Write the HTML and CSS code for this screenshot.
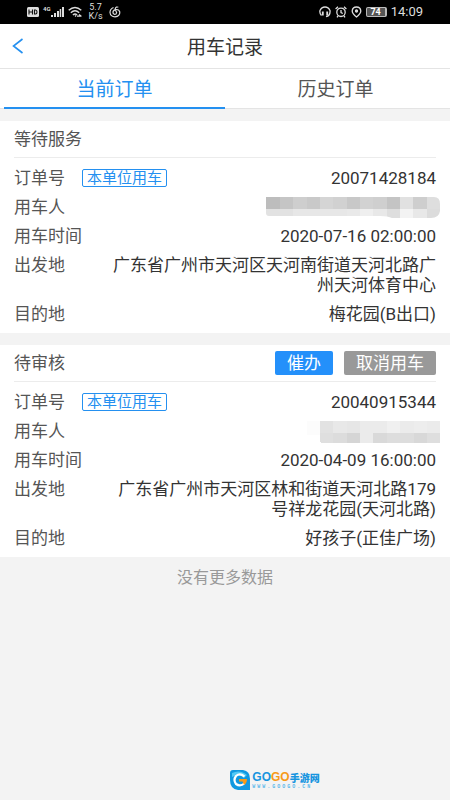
FILE: index.html
```html
<!DOCTYPE html>
<html lang="zh-CN">
<head>
<meta charset="utf-8">
<meta name="viewport" content="width=device-width, initial-scale=1">
<title>用车记录</title>
<link rel="stylesheet" href="styles.css">
</head>
<body>
<div class="status">
  <div class="status-group">
    <svg width="12" height="10" viewBox="0 0 12 10"><rect x="0" y="0" width="12" height="10" rx="1.5" fill="#ddd"/><path d="M2 2.500v5M5.500 2.500v5M2 5h3.500M7.500 3v4h1q1.500 0 1.500-2t-1.500-2z" fill="none" stroke="#111" stroke-width="1.100"/></svg>
    <div class="signal"><span class="net">4G</span><svg width="13" height="12" viewBox="0 0 13 12" fill="#ddd"><path d="M0 9h2v2H0zM3 7h2v4H3zM6 5h2v6H6zM8.700 3h1.500v8H8.700zM11 1h2v10h-2z"/></svg></div>
    <svg width="15" height="12" viewBox="0 0 15 12" fill="none" stroke="#ddd" stroke-width="1.400"><path d="M.7 4.300Q7 -1.200 13.300 4.300M2.800 6.700Q7 3 11.200 6.700M4.900 9Q7 7.200 9.100 9"/><path d="M7 9.500l1 1M9 10.200h4.500M11 8.500l2 1.500" stroke-width="1.200"/></svg>
    <div class="speed"><span>5.7</span><span>K/s</span></div>
    <svg width="12" height="12" viewBox="0 0 12 12" fill="none" stroke="#ddd" stroke-width="1.200"><path d="M4.500 1.500Q1 3 1 6.500Q1.500 10.800 6 10.800Q11 10.300 10.800 6Q10 3 6.500 3.600Q3.600 4.200 4 7Q5 9 7 8Q8.300 6.500 7 5.300L6.300 2.500Q7 .3 9.300 1.300"/></svg>
  </div>
  <div class="status-group">
    <svg width="12" height="12" viewBox="0 0 12 12" fill="none" stroke="#ddd" stroke-width="1.300"><path d="M2.500 9.500Q.3 7 1 4.500Q2.500 1 6 1T11 4.500Q11.600 9.500 7 10.700"/><path d="M3.800 5.500v4M8.200 5.500v4" stroke-width="1.800"/></svg>
    <svg width="12" height="12" viewBox="0 0 12 12" fill="none" stroke="#ddd" stroke-width="1.300"><circle cx="6" cy="6.300" r="4.200"/><path d="M.6 3L3 .8M9 .8L11.400 3M6 4v2.500l1.800 1M3 10l-1 1.300M9 10l1 1.300"/></svg>
    <svg width="11" height="12" viewBox="0 0 11 12" fill="none" stroke="#ddd" stroke-width="1.300"><path d="M5.500 11Q1.200 7.500 1.200 5Q1.500 1 5.500 1T9.800 5Q9.800 7.500 5.500 11z"/><circle cx="5.500" cy="5" r="1" fill="#ddd"/></svg>
    <div class="battery">74</div>
    <span class="clock">14:09</span>
  </div>
</div>

<header class="nav">
  <button class="back" type="button" aria-label="返回"><svg width="12" height="16" viewBox="0 0 12 16"><path d="M10.500 1L1.500 8l9 7" fill="none" stroke="#2490f0" stroke-width="1.600"/></svg></button>
  <h1>用车记录</h1>
</header>

<nav class="tabs">
  <button class="tab active" type="button">当前订单</button>
  <button class="tab" type="button">历史订单</button>
</nav>

<main>
  <section class="card">
    <div class="card-head"><h2>等待服务</h2></div>
    <dl>
      <div class="row"><dt>订单号<span class="tag">本单位用车</span></dt><dd>20071428184</dd></div>
      <div class="row"><dt>用车人</dt><dd class="masked">
        <svg width="174" height="22" viewBox="0 0 174 22" shape-rendering="crispEdges">
          <clipPath id="m1"><path d="M0 0H168Q174 0 174 7V14Q173 21 165 21H126Q122 19 114 19H3Q0 19 0 16z"/></clipPath>
          <g clip-path="url(#m1)">
            <path fill="#bdbdbd" d="M0 0h14v12H0z"/><path fill="#c5c5c5" d="M14 0h13v12H14z"/><path fill="#cecece" d="M27 0h14v12H27z"/><path fill="#c9c9c9" d="M41 0h13v12H41z"/><path fill="#d5d5d5" d="M54 0h13v12H54z"/><path fill="#d1d1d1" d="M67 0h14v12H67z"/><path fill="#c8c8c8" d="M81 0h13v12H81z"/><path fill="#d2d2d2" d="M94 0h13v12H94z"/><path fill="#cfcfcf" d="M107 0h14v12h-14z"/><path fill="#c4c4c4" d="M121 0h13v12h-13z"/><path fill="#e1e1e1" d="M134 0h13v12h-13z"/><path fill="#cecece" d="M147 0h14v12h-14z"/><path fill="#dedede" d="M161 0h13v12h-13z"/>
            <path fill="#e2e2e2" d="M0 12h27v10H0z"/><path fill="#e7e7e7" d="M27 12h54v10H27z"/><path fill="#e9e9e9" d="M81 12h13v10H81z"/><path fill="#efefef" d="M94 12h13v10H94z"/><path fill="#e8e8e8" d="M107 12h14v10h-14z"/><path fill="#dedede" d="M121 12h13v10h-13z"/><path fill="#f3f3f3" d="M134 12h13v10h-13z"/><path fill="#e8e8e8" d="M147 12h14v10h-14z"/><path fill="#dcdcdc" d="M161 12h13v10h-13z"/>
          </g>
        </svg></dd></div>
      <div class="row"><dt>用车时间</dt><dd>2020-07-16 02:00:00</dd></div>
      <div class="row"><dt>出发地</dt><dd>广东省广州市天河区天河南街道天河北路广州天河体育中心</dd></div>
      <div class="row"><dt>目的地</dt><dd>梅花园(B出口)</dd></div>
    </dl>
  </section>

  <section class="card">
    <div class="card-head"><h2>待审核</h2>
      <div class="actions"><button class="btn primary" type="button">催办</button><button class="btn" type="button">取消用车</button></div>
    </div>
    <dl>
      <div class="row"><dt>订单号<span class="tag">本单位用车</span></dt><dd>20040915344</dd></div>
      <div class="row"><dt>用车人</dt><dd class="masked">
        <svg width="133" height="22" viewBox="0 1 133 22" shape-rendering="crispEdges">
          <path fill="#fcfcfc" d="M0 1h13v14H0z"/><path fill="#e2e2e2" d="M13 1h13v12H13z"/><path fill="#e8e8e8" d="M26 1h14v12H26z"/><path fill="#e6e6e6" d="M40 1h13v12H40z"/><path fill="#ebebeb" d="M53 1h27v12H53z"/><path fill="#f0f0f0" d="M80 1h13v12H80z"/><path fill="#ebebeb" d="M93 1h14v12H93z"/><path fill="#ededed" d="M107 1h13v12h-13z"/><path fill="#ebebeb" d="M120 1h13v12h-13z"/>
          <path fill="#dfdfdf" d="M13 13h13v11h-4q-6 0-9-2z"/><path fill="#dcdcdc" d="M26 13h14v11H26z"/><path fill="#d5d5d5" d="M40 13h13v11H40z"/><path fill="#ebebeb" d="M53 13h13v11H53z"/><path fill="#d9d9d9" d="M66 13h14v11H66z"/><path fill="#dddddd" d="M80 13h27v11H80z"/><path fill="#d8d8d8" d="M107 13h13v11h-13z"/><path fill="#dedede" d="M120 13h13v11h-13z"/>
        </svg></dd></div>
      <div class="row"><dt>用车时间</dt><dd>2020-04-09 16:00:00</dd></div>
      <div class="row"><dt>出发地</dt><dd>广东省广州市天河区林和街道天河北路179号祥龙花园(天河北路)</dd></div>
      <div class="row"><dt>目的地</dt><dd>好孩子(正佳广场)</dd></div>
    </dl>
  </section>
  <p class="end">没有更多数据</p>
</main>

<footer class="brand">
  <svg width="20" height="20" viewBox="0 0 20 20"><path d="M3 0H13Q20 1 20 9V20H8Q0 19 0 10V3Q0 0 3 0z" fill="#1198e0"/><path d="M2 3Q10-1 17 5L14 8Q9 3 2 7z" fill="#53c9f4"/><path d="M14.500 6.500Q10 2.500 6 6Q3 10 6 14Q10 17 14.500 13.500" fill="none" stroke="#fff" stroke-width="2.200"/><path d="M9 9h8q0 4-3 6l-1.500-3.500H9z" fill="#f79a18"/></svg>
  <div class="brand-text">
    <div class="brand-name"><span class="blue">GO</span><span class="orange">GO</span><span class="cn">手游网</span></div>
    <div class="brand-url">WWW.GOOGO.CN</div>
  </div>
</footer>
</body>
</html>
```

FILE: styles.css
```css
* { box-sizing: border-box; margin: 0; padding: 0; }
body {
  min-height: 100vh;
  display: flex;
  flex-direction: column;
  background: #f3f3f3;
  color: #333;
  font: 17px/20px Roboto, "Noto Sans CJK SC", sans-serif;
}
button { font: inherit; border: 0; background: none; cursor: pointer; }
svg { display: block; flex: none; }

.status {
  height: 24px;
  padding: 0 27px;
  display: flex;
  justify-content: space-between;
  align-items: center;
  background: #000;
  color: #ddd;
}
.status-group { display: flex; align-items: center; gap: 4px; }
.signal { display: flex; align-items: flex-start; }
.net { font-size: 6px; line-height: 6px; font-weight: 700; }
.speed {
  display: flex;
  flex-direction: column;
  align-items: center;
  padding: 0 2px;
  font-size: 9px;
  line-height: 9px;
}
.battery {
  width: 21px;
  border: 1px solid #bbb;
  border-right-width: 2px;
  border-radius: 2px;
  background: #555;
  color: #fff;
  text-align: center;
  font-size: 9px;
  line-height: 8px;
  font-weight: 700;
}
.clock { font-size: 13px; }

.nav {
  height: 45px;
  display: grid;
  grid-template-columns: 44px 1fr 44px;
  align-items: center;
  background: #fff;
  border-bottom: 1px solid #e4e4e4;
}
.nav h1 { padding-top: 4px; font-size: 19px; line-height: 24px; font-weight: 400; text-align: center; }
.back { height: 44px; padding: 0 12px; }

.tabs {
  height: 40px;
  padding: 0 4px;
  display: grid;
  grid-template-columns: 1fr 1fr;
  background: #fff;
  border-bottom: 1px solid #e4e4e4;
}
.tab { height: 40px; padding-top: 4px; font-size: 19px; color: #555; border-bottom: 2px solid transparent; }
.tab.active { color: #2490f0; border-color: #2490f0; }

main { padding-top: 12px; }
.card { padding: 0 14px; margin-bottom: 12px; background: #fff; }
.card-head {
  height: 37px;
  display: flex;
  justify-content: space-between;
  align-items: center;
  border-bottom: 1px solid #ececec;
}
.card-head h2 { font-size: 17px; font-weight: 400; color: #555; }
.actions { display: flex; gap: 11px; }
.btn {
  height: 24px;
  padding: 0 12px;
  border-radius: 2px;
  background: #999;
  color: #fff;
}
.btn.primary { background: #2490fa; }

dl { display: flex; flex-direction: column; gap: 9px; padding: 10px 0 9px; }
.row { display: flex; justify-content: space-between; align-items: flex-start; }
dt { flex: none; width: 84px; height: 20px; display: flex; align-items: center; white-space: nowrap; color: #555; }
dd { flex: 0 1 330px; text-align: right; }
.tag {
  margin-left: 17px;
  padding: 0 4px;
  border: 1px solid #2490f0;
  border-radius: 2px;
  color: #2490f0;
  font-size: 15px;
  line-height: 16px;
}
.masked { display: flex; justify-content: flex-end; margin: 0 -4px -2px 0; }
.end { color: #999; font-size: 16px; text-align: center; line-height: 18px; }

.brand {
  margin-top: auto;
  padding: 0 0 10px 100px;
  display: flex;
  justify-content: center;
  gap: 2px;
}
.brand-text { display: flex; flex-direction: column; }
.brand-name {
  display: flex;
  align-items: center;
  font: 700 12px/15px "Liberation Sans", sans-serif;
}
.blue { color: #1795df; }
.orange { color: #f79a18; }
.cn { color: #1795df; font: 900 10px/15px "Noto Sans CJK SC", sans-serif; }
.brand-url { color: #5bb8ea; font: 700 5px/5px "Liberation Mono", monospace; letter-spacing: 2px; }
```
